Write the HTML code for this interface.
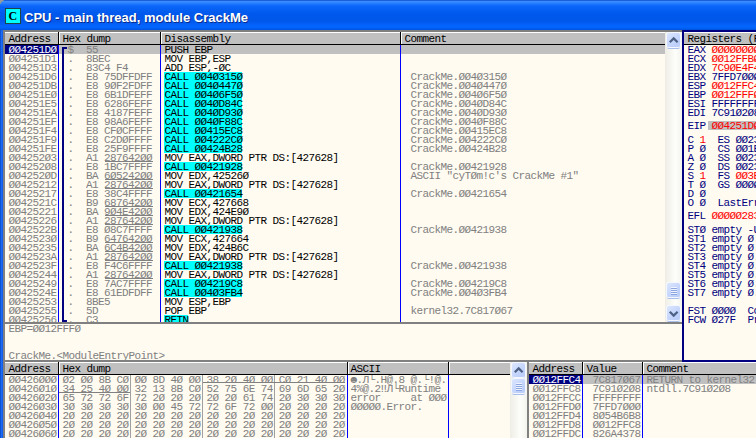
<!DOCTYPE html>
<html><head><meta charset="utf-8"><style>
html,body{margin:0;padding:0;}
body{width:756px;height:438px;overflow:hidden;position:relative;background:#FFFBF0;}
div,p,svg{position:absolute;margin:0;}
p{font-family:"Liberation Mono",monospace;font-size:11px;line-height:9px;letter-spacing:-0.6px;white-space:pre;transform:scaleY(0.96);transform-origin:0 7.4px;}
p.t{letter-spacing:0;transform:none;-webkit-text-stroke-width:0;}
</style></head><body>
<div style="left:0px;top:0px;width:756px;height:30px;background:linear-gradient(to bottom,#0A47C8 0px,#3A8EFF 1.5px,#2A80FF 3px,#0A66F8 6px,#0058EC 14px,#0058EA 21px,#0362FA 25px,#0366FE 27px,#005CEE 29px,#0050D5 30px)"></div>
<div style="left:0px;top:0px;width:4px;height:4px;background:#9C9A94;"></div>
<div style="left:0px;top:0px;width:8px;height:8px;background:linear-gradient(to bottom,#0A47C8 0px,#3A8EFF 1.5px,#2A80FF 3px,#0A66F8 6px,#0060F2 8px);border-top-left-radius:6px;"></div>
<div style="left:5px;top:8px;width:14px;height:14px;background:#00FFFF;border:1px solid #1E4646"></div>
<p class="t" style="left:8.6px;top:9.4px;font:bold 12px/14px 'Liberation Serif',serif;color:#000;">C</p>
<p class="t" style="left:24px;top:8px;font:bold 13px/20px 'Liberation Sans',sans-serif;color:#fff;text-shadow:1px 1px 0 #0A2C8C;">CPU - main thread, module CrackMe</p>
<div style="left:0px;top:30px;width:3px;height:408px;background:linear-gradient(to right,#0B4BC8,#1A66F0 40%,#0F5CE8)"></div>
<div style="left:0px;top:30px;width:3px;height:408px;background:linear-gradient(to right,#0846C0,#1C6CF6 50%,#0B58E4)"></div>
<div style="left:3px;top:30px;width:2px;height:408px;background:#808080"></div>
<div style="left:3px;top:30px;width:679px;height:2px;background:#808080"></div>
<div style="left:5px;top:32px;width:677px;height:406px;background:#FFFBF0"></div>
<div style="left:5px;top:45px;width:660px;height:277px;overflow:hidden">
<div style="left:54px;top:0px;width:606px;height:9px;background:#C0C0C0"></div>
<div style="left:0px;top:0px;width:53px;height:9px;background:#000080"></div>
<p style="left:3.6px;top:0.5px;color:#FFFFFF;">ØØ4251DØ</p>
<p style="left:62.6px;top:0.5px;color:#808080;">$</p>
<p style="left:81.1px;top:0.5px;color:#808080;">55</p>
<p style="left:159.6px;top:0.5px;color:#000;">PUSH EBP</p>
<p style="left:3.6px;top:9.5px;color:#808080;">ØØ4251D1</p>
<p style="left:62.6px;top:9.5px;color:#808080;">.</p>
<p style="left:81.1px;top:9.5px;color:#808080;">8BEC</p>
<p style="left:159.6px;top:9.5px;color:#000;">MOV EBP,ESP</p>
<p style="left:3.6px;top:18.5px;color:#808080;">ØØ4251D3</p>
<p style="left:62.6px;top:18.5px;color:#808080;">.</p>
<p style="left:81.1px;top:18.5px;color:#808080;">83C4 F4</p>
<p style="left:159.6px;top:18.5px;color:#000;">ADD ESP,-ØC</p>
<p style="left:3.6px;top:27.5px;color:#808080;">ØØ4251D6</p>
<p style="left:62.6px;top:27.5px;color:#808080;">.</p>
<p style="left:81.1px;top:27.5px;color:#808080;">E8 75DFFDFF</p>
<div style="left:159px;top:27px;width:78px;height:9px;background:#00FFFF"></div>
<p style="left:159.6px;top:27.5px;color:#000;">CALL ØØ4Ø315Ø</p>
<p style="left:405.6px;top:27.5px;color:#808080;">CrackMe.ØØ4Ø315Ø</p>
<p style="left:3.6px;top:36.5px;color:#808080;">ØØ4251DB</p>
<p style="left:62.6px;top:36.5px;color:#808080;">.</p>
<p style="left:81.1px;top:36.5px;color:#808080;">E8 9ØF2FDFF</p>
<div style="left:159px;top:36px;width:78px;height:9px;background:#00FFFF"></div>
<p style="left:159.6px;top:36.5px;color:#000;">CALL ØØ4Ø447Ø</p>
<p style="left:405.6px;top:36.5px;color:#808080;">CrackMe.ØØ4Ø447Ø</p>
<p style="left:3.6px;top:45.5px;color:#808080;">ØØ4251EØ</p>
<p style="left:62.6px;top:45.5px;color:#808080;">.</p>
<p style="left:81.1px;top:45.5px;color:#808080;">E8 6B1DFEFF</p>
<div style="left:159px;top:45px;width:78px;height:9px;background:#00FFFF"></div>
<p style="left:159.6px;top:45.5px;color:#000;">CALL ØØ4Ø6F5Ø</p>
<p style="left:405.6px;top:45.5px;color:#808080;">CrackMe.ØØ4Ø6F5Ø</p>
<p style="left:3.6px;top:54.5px;color:#808080;">ØØ4251E5</p>
<p style="left:62.6px;top:54.5px;color:#808080;">.</p>
<p style="left:81.1px;top:54.5px;color:#808080;">E8 6286FEFF</p>
<div style="left:159px;top:54px;width:78px;height:9px;background:#00FFFF"></div>
<p style="left:159.6px;top:54.5px;color:#000;">CALL ØØ4ØD84C</p>
<p style="left:405.6px;top:54.5px;color:#808080;">CrackMe.ØØ4ØD84C</p>
<p style="left:3.6px;top:63.5px;color:#808080;">ØØ4251EA</p>
<p style="left:62.6px;top:63.5px;color:#808080;">.</p>
<p style="left:81.1px;top:63.5px;color:#808080;">E8 4187FEFF</p>
<div style="left:159px;top:63px;width:78px;height:9px;background:#00FFFF"></div>
<p style="left:159.6px;top:63.5px;color:#000;">CALL ØØ4ØD93Ø</p>
<p style="left:405.6px;top:63.5px;color:#808080;">CrackMe.ØØ4ØD93Ø</p>
<p style="left:3.6px;top:72.5px;color:#808080;">ØØ4251EF</p>
<p style="left:62.6px;top:72.5px;color:#808080;">.</p>
<p style="left:81.1px;top:72.5px;color:#808080;">E8 98A6FEFF</p>
<div style="left:159px;top:72px;width:78px;height:9px;background:#00FFFF"></div>
<p style="left:159.6px;top:72.5px;color:#000;">CALL ØØ4ØF88C</p>
<p style="left:405.6px;top:72.5px;color:#808080;">CrackMe.ØØ4ØF88C</p>
<p style="left:3.6px;top:81.5px;color:#808080;">ØØ4251F4</p>
<p style="left:62.6px;top:81.5px;color:#808080;">.</p>
<p style="left:81.1px;top:81.5px;color:#808080;">E8 CFØCFFFF</p>
<div style="left:159px;top:81px;width:78px;height:9px;background:#00FFFF"></div>
<p style="left:159.6px;top:81.5px;color:#000;">CALL ØØ415EC8</p>
<p style="left:405.6px;top:81.5px;color:#808080;">CrackMe.ØØ415EC8</p>
<p style="left:3.6px;top:90.5px;color:#808080;">ØØ4251F9</p>
<p style="left:62.6px;top:90.5px;color:#808080;">.</p>
<p style="left:81.1px;top:90.5px;color:#808080;">E8 C2DØFFFF</p>
<div style="left:159px;top:90px;width:78px;height:9px;background:#00FFFF"></div>
<p style="left:159.6px;top:90.5px;color:#000;">CALL ØØ4222CØ</p>
<p style="left:405.6px;top:90.5px;color:#808080;">CrackMe.ØØ4222CØ</p>
<p style="left:3.6px;top:99.5px;color:#808080;">ØØ4251FE</p>
<p style="left:62.6px;top:99.5px;color:#808080;">.</p>
<p style="left:81.1px;top:99.5px;color:#808080;">E8 25F9FFFF</p>
<div style="left:159px;top:99px;width:78px;height:9px;background:#00FFFF"></div>
<p style="left:159.6px;top:99.5px;color:#000;">CALL ØØ424B28</p>
<p style="left:405.6px;top:99.5px;color:#808080;">CrackMe.ØØ424B28</p>
<p style="left:3.6px;top:108.5px;color:#808080;">ØØ4252Ø3</p>
<p style="left:62.6px;top:108.5px;color:#808080;">.</p>
<p style="left:81.1px;top:108.5px;color:#808080;">A1 287642ØØ</p>
<div style="left:99.5px;top:116px;width:48px;height:1px;background:#808080"></div>
<p style="left:159.6px;top:108.5px;color:#000;">MOV EAX,DWORD PTR DS:[427628]</p>
<p style="left:3.6px;top:117.5px;color:#808080;">ØØ4252Ø8</p>
<p style="left:62.6px;top:117.5px;color:#808080;">.</p>
<p style="left:81.1px;top:117.5px;color:#808080;">E8 1BC7FFFF</p>
<div style="left:159px;top:117px;width:78px;height:9px;background:#00FFFF"></div>
<p style="left:159.6px;top:117.5px;color:#000;">CALL ØØ421928</p>
<p style="left:405.6px;top:117.5px;color:#808080;">CrackMe.ØØ421928</p>
<p style="left:3.6px;top:126.5px;color:#808080;">ØØ4252ØD</p>
<p style="left:62.6px;top:126.5px;color:#808080;">.</p>
<p style="left:81.1px;top:126.5px;color:#808080;">BA 6Ø5242ØØ</p>
<div style="left:99.5px;top:134px;width:48px;height:1px;background:#808080"></div>
<p style="left:159.6px;top:126.5px;color:#000;">MOV EDX,42526Ø</p>
<p style="left:405.6px;top:126.5px;color:#808080;">ASCII &quot;cyTØm!c&#x27;s CrackMe #1&quot;</p>
<p style="left:3.6px;top:135.5px;color:#808080;">ØØ425212</p>
<p style="left:62.6px;top:135.5px;color:#808080;">.</p>
<p style="left:81.1px;top:135.5px;color:#808080;">A1 287642ØØ</p>
<div style="left:99.5px;top:143px;width:48px;height:1px;background:#808080"></div>
<p style="left:159.6px;top:135.5px;color:#000;">MOV EAX,DWORD PTR DS:[427628]</p>
<p style="left:3.6px;top:144.5px;color:#808080;">ØØ425217</p>
<p style="left:62.6px;top:144.5px;color:#808080;">.</p>
<p style="left:81.1px;top:144.5px;color:#808080;">E8 38C4FFFF</p>
<div style="left:159px;top:144px;width:78px;height:9px;background:#00FFFF"></div>
<p style="left:159.6px;top:144.5px;color:#000;">CALL ØØ421654</p>
<p style="left:405.6px;top:144.5px;color:#808080;">CrackMe.ØØ421654</p>
<p style="left:3.6px;top:153.5px;color:#808080;">ØØ42521C</p>
<p style="left:62.6px;top:153.5px;color:#808080;">.</p>
<p style="left:81.1px;top:153.5px;color:#808080;">B9 687642ØØ</p>
<div style="left:99.5px;top:161px;width:48px;height:1px;background:#808080"></div>
<p style="left:159.6px;top:153.5px;color:#000;">MOV ECX,427668</p>
<p style="left:3.6px;top:162.5px;color:#808080;">ØØ425221</p>
<p style="left:62.6px;top:162.5px;color:#808080;">.</p>
<p style="left:81.1px;top:162.5px;color:#808080;">BA 9Ø4E42ØØ</p>
<div style="left:99.5px;top:170px;width:48px;height:1px;background:#808080"></div>
<p style="left:159.6px;top:162.5px;color:#000;">MOV EDX,424E9Ø</p>
<p style="left:3.6px;top:171.5px;color:#808080;">ØØ425226</p>
<p style="left:62.6px;top:171.5px;color:#808080;">.</p>
<p style="left:81.1px;top:171.5px;color:#808080;">A1 287642ØØ</p>
<div style="left:99.5px;top:179px;width:48px;height:1px;background:#808080"></div>
<p style="left:159.6px;top:171.5px;color:#000;">MOV EAX,DWORD PTR DS:[427628]</p>
<p style="left:3.6px;top:180.5px;color:#808080;">ØØ42522B</p>
<p style="left:62.6px;top:180.5px;color:#808080;">.</p>
<p style="left:81.1px;top:180.5px;color:#808080;">E8 Ø8C7FFFF</p>
<div style="left:159px;top:180px;width:78px;height:9px;background:#00FFFF"></div>
<p style="left:159.6px;top:180.5px;color:#000;">CALL ØØ421938</p>
<p style="left:405.6px;top:180.5px;color:#808080;">CrackMe.ØØ421938</p>
<p style="left:3.6px;top:189.5px;color:#808080;">ØØ42523Ø</p>
<p style="left:62.6px;top:189.5px;color:#808080;">.</p>
<p style="left:81.1px;top:189.5px;color:#808080;">B9 647642ØØ</p>
<div style="left:99.5px;top:197px;width:48px;height:1px;background:#808080"></div>
<p style="left:159.6px;top:189.5px;color:#000;">MOV ECX,427664</p>
<p style="left:3.6px;top:198.5px;color:#808080;">ØØ425235</p>
<p style="left:62.6px;top:198.5px;color:#808080;">.</p>
<p style="left:81.1px;top:198.5px;color:#808080;">BA 6C4B42ØØ</p>
<div style="left:99.5px;top:206px;width:48px;height:1px;background:#808080"></div>
<p style="left:159.6px;top:198.5px;color:#000;">MOV EDX,424B6C</p>
<p style="left:3.6px;top:207.5px;color:#808080;">ØØ42523A</p>
<p style="left:62.6px;top:207.5px;color:#808080;">.</p>
<p style="left:81.1px;top:207.5px;color:#808080;">A1 287642ØØ</p>
<div style="left:99.5px;top:215px;width:48px;height:1px;background:#808080"></div>
<p style="left:159.6px;top:207.5px;color:#000;">MOV EAX,DWORD PTR DS:[427628]</p>
<p style="left:3.6px;top:216.5px;color:#808080;">ØØ42523F</p>
<p style="left:62.6px;top:216.5px;color:#808080;">.</p>
<p style="left:81.1px;top:216.5px;color:#808080;">E8 F4C6FFFF</p>
<div style="left:159px;top:216px;width:78px;height:9px;background:#00FFFF"></div>
<p style="left:159.6px;top:216.5px;color:#000;">CALL ØØ421938</p>
<p style="left:405.6px;top:216.5px;color:#808080;">CrackMe.ØØ421938</p>
<p style="left:3.6px;top:225.5px;color:#808080;">ØØ425244</p>
<p style="left:62.6px;top:225.5px;color:#808080;">.</p>
<p style="left:81.1px;top:225.5px;color:#808080;">A1 287642ØØ</p>
<div style="left:99.5px;top:233px;width:48px;height:1px;background:#808080"></div>
<p style="left:159.6px;top:225.5px;color:#000;">MOV EAX,DWORD PTR DS:[427628]</p>
<p style="left:3.6px;top:234.5px;color:#808080;">ØØ425249</p>
<p style="left:62.6px;top:234.5px;color:#808080;">.</p>
<p style="left:81.1px;top:234.5px;color:#808080;">E8 7AC7FFFF</p>
<div style="left:159px;top:234px;width:78px;height:9px;background:#00FFFF"></div>
<p style="left:159.6px;top:234.5px;color:#000;">CALL ØØ4219C8</p>
<p style="left:405.6px;top:234.5px;color:#808080;">CrackMe.ØØ4219C8</p>
<p style="left:3.6px;top:243.5px;color:#808080;">ØØ42524E</p>
<p style="left:62.6px;top:243.5px;color:#808080;">.</p>
<p style="left:81.1px;top:243.5px;color:#808080;">E8 61EDFDFF</p>
<div style="left:159px;top:243px;width:78px;height:9px;background:#00FFFF"></div>
<p style="left:159.6px;top:243.5px;color:#000;">CALL ØØ4Ø3FB4</p>
<p style="left:405.6px;top:243.5px;color:#808080;">CrackMe.ØØ4Ø3FB4</p>
<p style="left:3.6px;top:252.5px;color:#808080;">ØØ425253</p>
<p style="left:62.6px;top:252.5px;color:#808080;">.</p>
<p style="left:81.1px;top:252.5px;color:#808080;">8BE5</p>
<p style="left:159.6px;top:252.5px;color:#000;">MOV ESP,EBP</p>
<p style="left:3.6px;top:261.5px;color:#808080;">ØØ425255</p>
<p style="left:62.6px;top:261.5px;color:#808080;">.</p>
<p style="left:81.1px;top:261.5px;color:#808080;">5D</p>
<p style="left:159.6px;top:261.5px;color:#000;">POP EBP</p>
<p style="left:405.6px;top:261.5px;color:#808080;">kernel32.7C817Ø67</p>
<p style="left:3.6px;top:270.5px;color:#808080;">ØØ425256</p>
<p style="left:62.6px;top:270.5px;color:#808080;">.</p>
<p style="left:81.1px;top:270.5px;color:#808080;">C3</p>
<div style="left:159px;top:270px;width:24px;height:9px;background:#00FFFF"></div>
<p style="left:159.6px;top:270.5px;color:#000;">RETN</p>
<div style="left:53px;top:0px;width:1px;height:277px;background:#0000FF"></div>
<div style="left:155px;top:0px;width:1px;height:277px;background:#0000FF"></div>
<div style="left:395px;top:0px;width:1px;height:277px;background:#0000FF"></div>
<div style="left:57px;top:2px;width:2px;height:275px;background:#000080"></div>
<div style="left:57px;top:2px;width:5px;height:2px;background:#000080"></div>
<div style="left:57px;top:275px;width:5px;height:2px;background:#000080"></div>
</div>
<div style="left:5px;top:32px;width:660px;height:13px;background:#C0C0C0"></div>
<div style="left:5px;top:32px;width:660px;height:1px;background:#FFFFFF"></div>
<div style="left:5px;top:44px;width:660px;height:1px;background:#000000"></div>
<div style="left:58px;top:32px;width:1px;height:12px;background:#000000"></div>
<div style="left:59px;top:32px;width:1px;height:12px;background:#FFFFFF"></div>
<div style="left:160px;top:32px;width:1px;height:12px;background:#000000"></div>
<div style="left:161px;top:32px;width:1px;height:12px;background:#FFFFFF"></div>
<div style="left:400px;top:32px;width:1px;height:12px;background:#000000"></div>
<div style="left:401px;top:32px;width:1px;height:12px;background:#FFFFFF"></div>
<p style="left:8.6px;top:34.5px;color:#000;">Address</p>
<p style="left:62.6px;top:34.5px;color:#000;">Hex dump</p>
<p style="left:164.6px;top:34.5px;color:#000;">Disassembly</p>
<p style="left:404.6px;top:34.5px;color:#000;">Comment</p>
<div style="left:665px;top:32px;width:17px;height:290px;background:linear-gradient(to right,#EEEDE5,#FDFDFA 60%,#F3F3EE)"></div>
<div style="left:667.0px;top:33px;width:13px;height:14px;border-radius:2px;background:linear-gradient(135deg,#DCE7FE,#C5D5FC 55%,#B8CCF7);box-shadow:0 0 0 1px #F4F7FE,0 2px 0 #A9BFEC;"></div>
<svg style="left:666.5px;top:33px" width="14" height="15"><path d="M2.8 9.3 L6.7 5.4 L10.6 9.3" stroke="#4D6185" stroke-width="2.2" fill="none"/></svg>
<div style="left:667.0px;top:283px;width:13px;height:14px;border-radius:2px;background:linear-gradient(135deg,#DCE7FE,#C5D5FC 55%,#B8CCF7);box-shadow:0 0 0 1px #F4F7FE,0 2px 0 #A9BFEC;"></div>
<svg style="left:666.5px;top:283px" width="14" height="15"><path d="M4 4.5h6M4 6.5h6M4 8.5h6M4 10.5h6" stroke="#EEF3FF" stroke-width="1" fill="none"/><path d="M4 5.5h6M4 7.5h6M4 9.5h6M4 11.5h6" stroke="#8CA6E0" stroke-width="1" fill="none"/></svg>
<div style="left:667.0px;top:305.5px;width:13px;height:14px;border-radius:2px;background:linear-gradient(135deg,#DCE7FE,#C5D5FC 55%,#B8CCF7);box-shadow:0 0 0 1px #F4F7FE,0 2px 0 #A9BFEC;"></div>
<svg style="left:666.5px;top:305.5px" width="14" height="15"><path d="M2.8 5.7 L6.7 9.6 L10.6 5.7" stroke="#4D6185" stroke-width="2.2" fill="none"/></svg>
<div style="left:5px;top:322px;width:677px;height:2px;background:#808080"></div>
<p style="left:8.6px;top:324.5px;color:#808080;">EBP=ØØ12FFFØ</p>
<p style="left:8.6px;top:351.5px;color:#808080;">CrackMe.&lt;ModuleEntryPoint&gt;</p>
<div style="left:3px;top:360px;width:679px;height:2px;background:#808080"></div>
<div style="left:682px;top:30px;width:74px;height:2px;background:#000080"></div>
<div style="left:682px;top:30px;width:2px;height:332px;background:#000080"></div>
<div style="left:682px;top:360px;width:74px;height:2px;background:#000080"></div>
<div style="left:684px;top:32px;width:72px;height:13px;background:#C0C0C0"></div>
<div style="left:684px;top:32px;width:72px;height:1px;background:#FFFFFF"></div>
<div style="left:684px;top:44px;width:72px;height:1px;background:#000000"></div>
<p style="left:687.6px;top:34.5px;color:#000;">Registers (FPU)</p>
<p style="left:687.6px;top:45.5px;color:#000080;">EAX </p>
<p style="left:711.6px;top:45.5px;color:#FF0000;">ØØØØØØØØ</p>
<p style="left:687.6px;top:54.5px;color:#000080;">ECX </p>
<p style="left:711.6px;top:54.5px;color:#FF0000;">ØØ12FFBØ</p>
<p style="left:687.6px;top:63.5px;color:#000080;">EDX </p>
<p style="left:711.6px;top:63.5px;color:#FF0000;">7C9ØE4F4</p>
<p style="left:687.6px;top:72.5px;color:#000080;">EBX </p>
<p style="left:711.6px;top:72.5px;color:#000080;">7FFD7ØØØ</p>
<p style="left:687.6px;top:81.5px;color:#000080;">ESP </p>
<p style="left:711.6px;top:81.5px;color:#FF0000;">ØØ12FFC4</p>
<p style="left:759.6px;top:81.5px;color:#000080;"> ASCII &quot;C&quot;</p>
<p style="left:687.6px;top:90.5px;color:#000080;">EBP </p>
<p style="left:711.6px;top:90.5px;color:#FF0000;">ØØ12FFFØ</p>
<p style="left:687.6px;top:99.5px;color:#000080;">ESI </p>
<p style="left:711.6px;top:99.5px;color:#000080;">FFFFFFFF</p>
<p style="left:687.6px;top:108.5px;color:#000080;">EDI </p>
<p style="left:711.6px;top:108.5px;color:#000080;">7C91Ø2Ø8</p>
<p style="left:759.6px;top:108.5px;color:#000080;"> ntdll.7C91Ø2Ø8</p>
<p style="left:687.6px;top:122.0px;color:#000080;">EIP </p>
<div style="left:708px;top:121px;width:48px;height:9px;background:#C0C0C0"></div>
<p style="left:711.6px;top:122.0px;color:#FF0000;">ØØ4251DØ</p>
<p style="left:759.6px;top:122.0px;color:#000080;"> CrackMe.&lt;ModuleEntryPoint&gt;</p>
<p style="left:687.6px;top:135.5px;color:#000080;">C </p>
<p style="left:699.6px;top:135.5px;color:#FF0000;">1</p>
<p style="left:705.6px;top:135.5px;color:#000080;">  ES ØØ23 32bit Ø(FFFFFFFF)</p>
<p style="left:687.6px;top:144.5px;color:#000080;">P Ø  CS ØØ1B 32bit Ø(FFFFFFFF)</p>
<p style="left:687.6px;top:153.5px;color:#000080;">A Ø  SS ØØ23 32bit Ø(FFFFFFFF)</p>
<p style="left:687.6px;top:162.5px;color:#000080;">Z Ø  DS ØØ23 32bit Ø(FFFFFFFF)</p>
<p style="left:687.6px;top:171.5px;color:#000080;">S </p>
<p style="left:699.6px;top:171.5px;color:#FF0000;">1</p>
<p style="left:705.6px;top:171.5px;color:#000080;">  FS </p>
<p style="left:735.6px;top:171.5px;color:#FF0000;">ØØ3B</p>
<p style="left:759.6px;top:171.5px;color:#000080;"> 32bit 7FFDFØØØ(FFF)</p>
<p style="left:687.6px;top:180.5px;color:#000080;">T Ø  GS ØØØØ NULL</p>
<p style="left:687.6px;top:189.5px;color:#000080;">D Ø</p>
<p style="left:687.6px;top:198.5px;color:#000080;">O Ø  LastErr ERROR_SUCCESS (ØØØØØØØØ)</p>
<p style="left:687.6px;top:212.0px;color:#000080;">EFL </p>
<p style="left:711.6px;top:212.0px;color:#FF0000;">ØØØØØ283</p>
<p style="left:759.6px;top:212.0px;color:#000080;"> (NO,B,NE,BE,S,PO,L,LE)</p>
<p style="left:687.6px;top:225.5px;color:#000080;">STØ empty -UNORM BDEC Ø1Ø5Ø1Ø4 ØØØØØØØØ</p>
<p style="left:687.6px;top:234.5px;color:#000080;">ST1 empty Ø.Ø</p>
<p style="left:687.6px;top:243.5px;color:#000080;">ST2 empty Ø.Ø</p>
<p style="left:687.6px;top:252.5px;color:#000080;">ST3 empty Ø.Ø</p>
<p style="left:687.6px;top:261.5px;color:#000080;">ST4 empty Ø.Ø</p>
<p style="left:687.6px;top:270.5px;color:#000080;">ST5 empty Ø.Ø</p>
<p style="left:687.6px;top:279.5px;color:#000080;">ST6 empty Ø.Ø</p>
<p style="left:687.6px;top:288.5px;color:#000080;">ST7 empty Ø.Ø</p>
<p style="left:687.6px;top:306.5px;color:#000080;">FST ØØØØ  Cond Ø Ø Ø Ø  Err Ø Ø Ø Ø Ø Ø Ø Ø  (GT)</p>
<p style="left:687.6px;top:315.5px;color:#000080;">FCW Ø27F  Prec NEAR,53  Mask    1 1 1 1 1 1</p>
<div style="left:5px;top:375px;width:505px;height:63px;overflow:hidden">
<p style="left:3.6px;top:0.5px;color:#808080;">ØØ426ØØØ</p>
<p style="left:57.6px;top:0.5px;color:#808080;">Ø2 ØØ 8B CØ ØØ 8D 4Ø ØØ 38 2Ø 4Ø ØØ CØ 21 4Ø ØØ</p>
<p style="left:345.6px;top:0.5px;color:#808080;">☻.Л└.Н@.8 @.└!@.</p>
<p style="left:3.6px;top:9.5px;color:#808080;">ØØ426Ø1Ø</p>
<p style="left:57.6px;top:9.5px;color:#808080;">34 25 4Ø ØØ 32 13 8B CØ 52 75 6E 74 69 6D 65 2Ø</p>
<p style="left:345.6px;top:9.5px;color:#808080;">4%@.2‼Л└Runtime </p>
<p style="left:3.6px;top:18.5px;color:#808080;">ØØ426Ø2Ø</p>
<p style="left:57.6px;top:18.5px;color:#808080;">65 72 72 6F 72 2Ø 2Ø 2Ø 2Ø 2Ø 61 74 2Ø 3Ø 3Ø 3Ø</p>
<p style="left:345.6px;top:18.5px;color:#808080;">error     at ØØØ</p>
<p style="left:3.6px;top:27.5px;color:#808080;">ØØ426Ø3Ø</p>
<p style="left:57.6px;top:27.5px;color:#808080;">3Ø 3Ø 3Ø 3Ø 3Ø ØØ 45 72 72 6F 72 ØØ 2Ø 2Ø 2Ø 2Ø</p>
<p style="left:345.6px;top:27.5px;color:#808080;">ØØØØØ.Error.    </p>
<p style="left:3.6px;top:36.5px;color:#808080;">ØØ426Ø4Ø</p>
<p style="left:57.6px;top:36.5px;color:#808080;">2Ø 2Ø 2Ø 2Ø 2Ø 2Ø 2Ø 2Ø 2Ø 2Ø 2Ø 2Ø 2Ø 2Ø 2Ø 2Ø</p>
<p style="left:345.6px;top:36.5px;color:#808080;">                </p>
<p style="left:3.6px;top:45.5px;color:#808080;">ØØ426Ø5Ø</p>
<p style="left:57.6px;top:45.5px;color:#808080;">2Ø 2Ø 2Ø 2Ø 2Ø 2Ø 2Ø 2Ø 2Ø 2Ø 2Ø 2Ø 2Ø 2Ø 2Ø 2Ø</p>
<p style="left:345.6px;top:45.5px;color:#808080;">                </p>
<p style="left:3.6px;top:54.5px;color:#808080;">ØØ426Ø6Ø</p>
<p style="left:57.6px;top:54.5px;color:#808080;">2Ø 2Ø 2Ø 2Ø 2Ø 2Ø 2Ø 2Ø 2Ø 2Ø 2Ø 2Ø 2Ø 2Ø 2Ø 2Ø</p>
<p style="left:345.6px;top:54.5px;color:#808080;">                </p>
<div style="left:53px;top:0px;width:1px;height:63px;background:#0000FF"></div>
<div style="left:342px;top:0px;width:1px;height:63px;background:#0000FF"></div>
<div style="left:443px;top:0px;width:1px;height:63px;background:#0000FF"></div>
<div style="left:125px;top:0px;width:1px;height:63px;background:#A0A0A0"></div>
<div style="left:197px;top:0px;width:1px;height:63px;background:#A0A0A0"></div>
<div style="left:269px;top:0px;width:1px;height:63px;background:#A0A0A0"></div>
<div style="left:198px;top:7px;width:142px;height:1px;background:#808080"></div>
<div style="left:54px;top:17px;width:71px;height:1px;background:#808080"></div>
</div>
<div style="left:5px;top:362px;width:505px;height:13px;background:#C0C0C0"></div>
<div style="left:5px;top:362px;width:505px;height:1px;background:#FFFFFF"></div>
<div style="left:5px;top:374px;width:505px;height:1px;background:#000000"></div>
<div style="left:58px;top:362px;width:1px;height:12px;background:#000000"></div>
<div style="left:59px;top:362px;width:1px;height:12px;background:#FFFFFF"></div>
<div style="left:347px;top:362px;width:1px;height:12px;background:#000000"></div>
<div style="left:348px;top:362px;width:1px;height:12px;background:#FFFFFF"></div>
<div style="left:448px;top:362px;width:1px;height:12px;background:#000000"></div>
<div style="left:449px;top:362px;width:1px;height:12px;background:#FFFFFF"></div>
<p style="left:8.6px;top:364.5px;color:#000;">Address</p>
<p style="left:62.6px;top:364.5px;color:#000;">Hex dump</p>
<p style="left:350.6px;top:364.5px;color:#000;">ASCII</p>
<div style="left:510px;top:362px;width:17px;height:76px;background:linear-gradient(to right,#EEEDE5,#FDFDFA 60%,#F3F3EE)"></div>
<div style="left:512.0px;top:363px;width:13px;height:14px;border-radius:2px;background:linear-gradient(135deg,#DCE7FE,#C5D5FC 55%,#B8CCF7);box-shadow:0 0 0 1px #F4F7FE,0 2px 0 #A9BFEC;"></div>
<svg style="left:511.5px;top:363px" width="14" height="15"><path d="M2.8 9.3 L6.7 5.4 L10.6 9.3" stroke="#4D6185" stroke-width="2.2" fill="none"/></svg>
<div style="left:512.0px;top:379px;width:13px;height:14px;border-radius:2px;background:linear-gradient(135deg,#DCE7FE,#C5D5FC 55%,#B8CCF7);box-shadow:0 0 0 1px #F4F7FE,0 2px 0 #A9BFEC;"></div>
<svg style="left:511.5px;top:379px" width="14" height="15"><path d="M4 4.5h6M4 6.5h6M4 8.5h6M4 10.5h6" stroke="#EEF3FF" stroke-width="1" fill="none"/><path d="M4 5.5h6M4 7.5h6M4 9.5h6M4 11.5h6" stroke="#8CA6E0" stroke-width="1" fill="none"/></svg>
<div style="left:527px;top:362px;width:2px;height:76px;background:#808080"></div>
<div style="left:583px;top:375px;width:173px;height:9px;background:#C0C0C0"></div>
<div style="left:529px;top:375px;width:53px;height:9px;background:#000080"></div>
<p style="left:532.6px;top:375.5px;color:#FFFFFF;">ØØ12FFC4</p>
<p style="left:592.6px;top:375.5px;color:#808080;">7C817Ø67</p>
<p style="left:646.6px;top:375.5px;color:#808080;">RETURN to kernel32.7C817Ø67</p>
<p style="left:532.6px;top:384.5px;color:#808080;">ØØ12FFC8</p>
<p style="left:592.6px;top:384.5px;color:#808080;">7C91Ø2Ø8</p>
<p style="left:646.6px;top:384.5px;color:#808080;">ntdll.7C91Ø2Ø8</p>
<p style="left:532.6px;top:393.5px;color:#808080;">ØØ12FFCC</p>
<p style="left:592.6px;top:393.5px;color:#808080;">FFFFFFFF</p>
<p style="left:532.6px;top:402.5px;color:#808080;">ØØ12FFDØ</p>
<p style="left:592.6px;top:402.5px;color:#808080;">7FFD7ØØØ</p>
<p style="left:532.6px;top:411.5px;color:#808080;">ØØ12FFD4</p>
<p style="left:592.6px;top:411.5px;color:#808080;">8Ø54B6B8</p>
<p style="left:532.6px;top:420.5px;color:#808080;">ØØ12FFD8</p>
<p style="left:592.6px;top:420.5px;color:#808080;">ØØ12FFC8</p>
<p style="left:532.6px;top:429.5px;color:#808080;">ØØ12FFDC</p>
<p style="left:592.6px;top:429.5px;color:#808080;">826A4378</p>
<div style="left:582px;top:375px;width:1px;height:63px;background:#0000FF"></div>
<div style="left:642px;top:375px;width:1px;height:63px;background:#0000FF"></div>
<div style="left:529px;top:362px;width:227px;height:13px;background:#C0C0C0"></div>
<div style="left:529px;top:362px;width:227px;height:1px;background:#FFFFFF"></div>
<div style="left:529px;top:374px;width:227px;height:1px;background:#000000"></div>
<div style="left:582px;top:362px;width:1px;height:12px;background:#000000"></div>
<div style="left:583px;top:362px;width:1px;height:12px;background:#FFFFFF"></div>
<div style="left:642px;top:362px;width:1px;height:12px;background:#000000"></div>
<div style="left:643px;top:362px;width:1px;height:12px;background:#FFFFFF"></div>
<p style="left:532.6px;top:364.5px;color:#000;">Address</p>
<p style="left:586.6px;top:364.5px;color:#000;">Value</p>
<p style="left:646.6px;top:364.5px;color:#000;">Comment</p>
</body></html>
